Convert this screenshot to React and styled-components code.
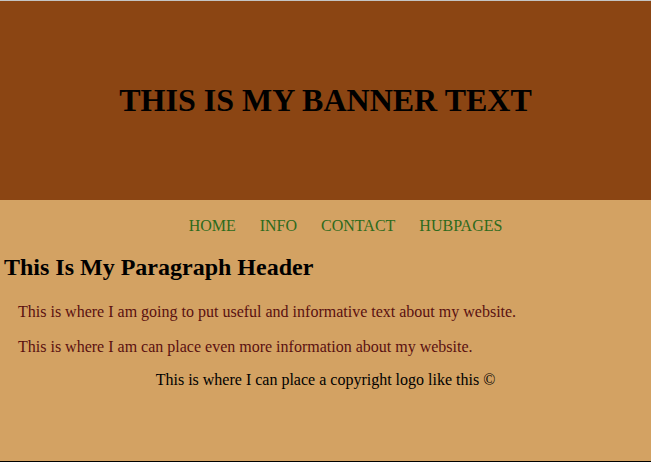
import React from "react";
import styled, { createGlobalStyle } from "styled-components";

const Global = createGlobalStyle`
  html, body { margin: 0; padding: 0; }
  body { font-family: "Liberation Serif", "Times New Roman", serif; background: #d3a263; }
`;

const Page = styled.div`
  height: 462px;
  box-sizing: border-box;
  border-top: 1px solid #c4c4c4;
  border-bottom: 1px solid #000;
  background: #d3a263;
  display: flex;
  flex-direction: column;
`;

const Banner = styled.header`
  height: 199px;
  background: #8b4513;
  display: flex;
  align-items: center;
  justify-content: center;
`;

const BannerTitle = styled.h1`
  margin: 0;
  font-size: 32px;
  font-weight: bold;
  color: #000;
`;

const Nav = styled.ul`
  margin: 17px 0 0;
  padding: 0 0 0 40px;
  list-style: none;
  display: flex;
  justify-content: center;
  gap: 24px;
`;

const NavItem = styled.li`
  font-size: 16px;
  color: #2d6a1c;
`;

const Heading = styled.h2`
  margin: 19px 0 0 4px;
  font-size: 24px;
  font-weight: bold;
  color: #000;
`;

const Para = styled.p`
  margin: ${(p) => p.$top}px 0 0 18px;
  font-size: 16px;
  color: #5a1010;
`;

const Footer = styled.p`
  margin: 15px 0 0;
  text-align: center;
  font-size: 16px;
  color: #000;
`;

export default function App() {
  return (
    <>
      <Global />
      <Page>
        <Banner>
          <BannerTitle>THIS IS MY BANNER TEXT</BannerTitle>
        </Banner>
        <Nav>
          <NavItem>HOME</NavItem>
          <NavItem>INFO</NavItem>
          <NavItem>CONTACT</NavItem>
          <NavItem>HUBPAGES</NavItem>
        </Nav>
        <Heading>This Is My Paragraph Header</Heading>
        <Para $top={22}>This is where I am going to put useful and informative text about my website.</Para>
        <Para $top={17}>This is where I am can place even more information about my website.</Para>
        <Footer>This is where I can place a copyright logo like this ©</Footer>
      </Page>
    </>
  );
}
